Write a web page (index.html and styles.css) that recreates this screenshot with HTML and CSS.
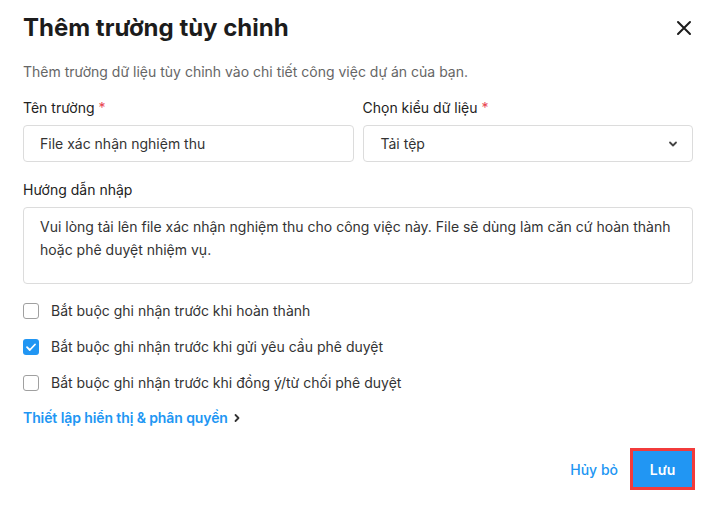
FILE: index.html
```html
<!DOCTYPE html>
<html lang="vi">
<head>
<meta charset="utf-8">
<title>Thêm trường tùy chỉnh</title>
<link rel="stylesheet" href="styles.css">
</head>
<body>
<div class="dialog">
  <div class="header">
    <h1 class="title">Thêm trường tùy chỉnh</h1>
    <button class="close" aria-label="Đóng">
      <svg width="16" height="16" viewBox="0 0 16 16"><path d="M2 2L14 14M14 2L2 14" stroke="#1c1c1c" stroke-width="2" stroke-linecap="round"/></svg>
    </button>
  </div>
  <p class="subtitle">Thêm trường dữ liệu tùy chỉnh vào chi tiết công việc dự án của bạn.</p>

  <div class="row">
    <div class="field">
      <label class="label">Tên trường <span class="req">*</span></label>
      <div class="input">File xác nhận nghiệm thu</div>
    </div>
    <div class="field">
      <label class="label">Chọn kiểu dữ liệu <span class="req">*</span></label>
      <div class="input select">
        <span>Tải tệp</span>
        <svg width="10" height="10" viewBox="0 0 10 10"><path d="M2 3.5L5 6.5L8 3.5" fill="none" stroke="#444" stroke-width="1.8" stroke-linecap="round" stroke-linejoin="round"/></svg>
      </div>
    </div>
  </div>

  <div class="field wide">
    <label class="label">Hướng dẫn nhập</label>
    <div class="textarea">Vui lòng tải lên file xác nhận nghiệm thu cho công việc này. File sẽ dùng làm căn cứ hoàn thành hoặc phê duyệt nhiệm vụ.</div>
  </div>

  <div class="checks">
    <div class="check"><span class="box"></span>Bắt buộc ghi nhận trước khi hoàn thành</div>
    <div class="check"><span class="box checked"><svg width="16" height="16" viewBox="0 0 16 16"><path d="M4 8.2L6.8 11L12 5.5" fill="none" stroke="#fff" stroke-width="1.8" stroke-linecap="round" stroke-linejoin="round"/></svg></span>Bắt buộc ghi nhận trước khi gửi yêu cầu phê duyệt</div>
    <div class="check"><span class="box"></span>Bắt buộc ghi nhận trước khi đồng ý/từ chối phê duyệt</div>
  </div>

  <a class="link">Thiết lập hiển thị &amp; phân quyền
    <svg width="10" height="10" viewBox="0 0 10 10"><path d="M3.5 2L6.5 5L3.5 8" fill="none" stroke="#333" stroke-width="1.8" stroke-linecap="round" stroke-linejoin="round"/></svg>
  </a>

  <div class="footer">
    <button class="cancel">Hủy bỏ</button>
    <span class="highlight"><button class="save">Lưu</button></span>
  </div>
</div>
</body>
</html>
```

FILE: styles.css
```css
* { box-sizing: border-box; }
html, body {
  margin: 0;
  background: #fff;
  font-family: Inter, "Noto Sans", "Liberation Sans", sans-serif;
  color: #222;
}
.dialog {
  width: 713px;
  height: 507px;
  padding: 12px 20px 0 23px;
}
.header {
  display: flex;
  align-items: center;
  justify-content: space-between;
}
.title {
  margin: 0;
  font-size: 24px;
  line-height: 32px;
  font-weight: 700;
  color: #1c1c1c;
}
.close {
  border: 0;
  background: none;
  padding: 0;
  margin-right: 1px;
  width: 16px;
  height: 16px;
  display: flex;
}
.subtitle {
  margin: 18px 0 0;
  font-size: 14px;
  line-height: 20px;
  color: #666;
}
.row {
  display: flex;
  gap: 9px;
  margin-top: 16px;
}
.field {
  flex: 1;
  display: flex;
  flex-direction: column;
}
.label {
  font-size: 14px;
  line-height: 20px;
  color: #222;
  margin-bottom: 7px;
}
.req { color: #e8434f; }
.input {
  height: 37px;
  border: 1px solid #dcdcdc;
  border-radius: 4px;
  padding: 0 16px;
  display: flex;
  align-items: center;
  font-size: 14px;
  color: #333;
}
.select {
  justify-content: space-between;
  padding-left: 17px;
  padding-right: 14px;
}
.wide { margin-top: 18px; }
.textarea {
  height: 77px;
  border: 1px solid #dcdcdc;
  border-radius: 4px;
  padding: 7px 16px;
  font-size: 14px;
  line-height: 23px;
  color: #333;
}
.checks {
  margin-top: 17px;
  display: flex;
  flex-direction: column;
  gap: 16px;
}
.check {
  display: flex;
  align-items: center;
  gap: 12px;
  font-size: 14px;
  line-height: 20px;
  color: #333;
}
.box {
  width: 16px;
  height: 16px;
  border: 1.5px solid #a0a0a0;
  border-radius: 3px;
  display: flex;
}
.box.checked {
  background: #2196f3;
  border: 0;
}
.link {
  display: flex;
  align-items: center;
  gap: 4px;
  margin-top: 15px;
  font-size: 14px;
  line-height: 20px;
  font-weight: 600;
  color: #2196f3;
  letter-spacing: -0.1px;
}
.footer {
  display: flex;
  justify-content: flex-end;
  align-items: center;
  gap: 12px;
  margin-top: 20px;
  margin-right: -2px;
}
.cancel {
  border: 0;
  background: none;
  padding: 0;
  font-family: inherit;
  font-size: 14px;
  font-weight: 500;
  color: #2196f3;
}
.highlight {
  display: flex;
  border: 3px solid #f23b3b;
}
.save {
  width: 59px;
  height: 36px;
  border: 0;
  background: #2196f3;
  color: #fff;
  font-family: inherit;
  font-size: 14px;
  font-weight: 600;
}
```
